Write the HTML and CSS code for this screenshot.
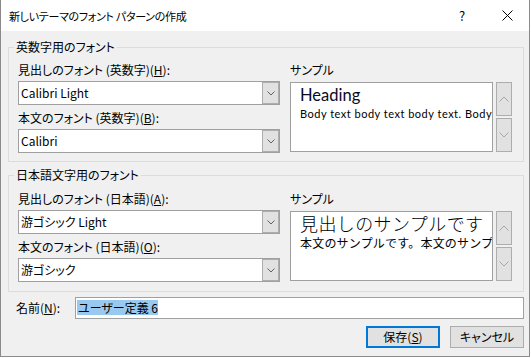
FILE: index.html
```html
<!DOCTYPE html>
<html>
  <head>
    <meta charset='utf-8'/>
    <title>新しいテーマのフォント パターンの作成</title>
    <link rel="stylesheet" href="styles.css">
  </head>
  <body>
    <div class='window'>
      <div class='titlebar'>
        <span class='title'>新しいテーマのフォント パターンの作成</span>
        <span class='title-btn help'>?</span>
        <span class='title-btn close'>
          <svg width='11' height='11' viewBox='0 0 11 11'><path d='M0.5 0.5 L10.5 10.5 M10.5 0.5 L0.5 10.5' stroke='#000' stroke-width='1' fill='none'/></svg>
        </span>
      </div>

      <div class='content'>
        <fieldset class='group'>
          <legend>英数字用のフォント</legend>
          <div class='group-grid'>
            <div class='fields'>
              <div class='field-label'>見出しのフォント (英数字)(<u>H</u>):</div>
              <div class='combo'>
                <span class='combo-text'>Calibri Light</span>
                <span class='combo-btn'><svg width='8' height='5' viewBox='0 0 8 5'><path d='M0.5 0.5 L4 4 L7.5 0.5' stroke='#606060' fill='none'/></svg></span>
              </div>
              <div class='field-label'>本文のフォント (英数字)(<u>B</u>):</div>
              <div class='combo'>
                <span class='combo-text'>Calibri</span>
                <span class='combo-btn'><svg width='8' height='5' viewBox='0 0 8 5'><path d='M0.5 0.5 L4 4 L7.5 0.5' stroke='#606060' fill='none'/></svg></span>
              </div>
            </div>
            <div class='sample'>
              <div class='field-label'>サンプル</div>
              <div class='sample-row'>
                <div class='sample-box sample-en'>
                  <div class='sample-head'>Heading</div>
                  <div class='sample-body'>Body text body text body text. Body text body text.</div>
                </div>
                <div class='spin'>
                  <span class='spin-btn'><svg width='10' height='6' viewBox='0 0 10 6'><path d='M0.5 5.5 L5 1 L9.5 5.5' stroke='#a6a6a6' fill='none'/></svg></span>
                  <span class='spin-btn'><svg width='10' height='6' viewBox='0 0 10 6'><path d='M0.5 0.5 L5 5 L9.5 0.5' stroke='#a6a6a6' fill='none'/></svg></span>
                </div>
              </div>
            </div>
          </div>
        </fieldset>

        <fieldset class='group group-ja'>
          <legend>日本語文字用のフォント</legend>
          <div class='group-grid'>
            <div class='fields'>
              <div class='field-label'>見出しのフォント (日本語)(<u>A</u>):</div>
              <div class='combo'>
                <span class='combo-text'>游ゴシック Light</span>
                <span class='combo-btn'><svg width='8' height='5' viewBox='0 0 8 5'><path d='M0.5 0.5 L4 4 L7.5 0.5' stroke='#606060' fill='none'/></svg></span>
              </div>
              <div class='field-label'>本文のフォント (日本語)(<u>O</u>):</div>
              <div class='combo'>
                <span class='combo-text'>游ゴシック</span>
                <span class='combo-btn'><svg width='8' height='5' viewBox='0 0 8 5'><path d='M0.5 0.5 L4 4 L7.5 0.5' stroke='#606060' fill='none'/></svg></span>
              </div>
            </div>
            <div class='sample'>
              <div class='field-label'>サンプル</div>
              <div class='sample-row'>
                <div class='sample-box sample-ja'>
                  <div class='sample-head'>見出しのサンプルです</div>
                  <div class='sample-body'>本文のサンプルです。本文のサンプルです。</div>
                </div>
                <div class='spin'>
                  <span class='spin-btn'><svg width='10' height='6' viewBox='0 0 10 6'><path d='M0.5 5.5 L5 1 L9.5 5.5' stroke='#a6a6a6' fill='none'/></svg></span>
                  <span class='spin-btn'><svg width='10' height='6' viewBox='0 0 10 6'><path d='M0.5 0.5 L5 5 L9.5 0.5' stroke='#a6a6a6' fill='none'/></svg></span>
                </div>
              </div>
            </div>
          </div>
        </fieldset>

        <div class='name-row'>
          <span class='name-label'>名前(<u>N</u>):</span>
          <div class='name-input'><span class='selected'>ユーザー定義 6</span></div>
        </div>

        <div class='actions'>
          <button class='btn btn-default'>保存(<u>S</u>)</button>
          <button class='btn'>キャンセル</button>
        </div>
      </div>
    </div>
  </body>
</html>
```

FILE: styles.css
```css
* {
  font-family: 'Noto Sans CJK JP', sans-serif;
}

body {
  margin: 0;
  background: #fff;
  font-size: 12px;
  line-height: 16px;
  color: #000;
  font-feature-settings: 'palt';
}

.window {
  width: 530px;
  height: 357px;
  box-sizing: border-box;
  border: 1px solid #8a8a8a;
  border-top: none;
  background: #f0f0f0;
}

.titlebar {
  height: 31px;
  background: #fff;
  display: flex;
  align-items: center;
}

.title {
  flex: 1;
  padding-left: 8px;
  font-size: 11px;
  letter-spacing: -0.3px;
}

.title-btn {
  height: 31px;
  display: flex;
  align-items: center;
  justify-content: center;
}

.help {
  width: 46px;
  font-size: 13px;
}

.close {
  width: 44px;
}

.content {
  padding: 8px 5px 0 7px;
}

.group {
  margin: 0;
  padding: 7px 11px 8px 9px;
  border: 1px solid #dcdcdc;
  min-width: 0;
}

.group + .group {
  margin-top: 5px;
}

.group-ja {
  padding-top: 8px;
  padding-bottom: 9px;
}

legend {
  padding: 0 2px;
  margin-left: -4px;
  line-height: 16px;
}

.group-grid {
  display: grid;
  grid-template-columns: 262px 1fr;
  column-gap: 10px;
}

.field-label {
  line-height: 16px;
}

.combo {
  margin: 3px 0 5px;
  height: 24px;
  box-sizing: border-box;
  border: 1px solid #a0a0a0;
  background: #fff;
  display: flex;
}

.combo:last-child {
  margin-bottom: 0;
}

.combo-text {
  flex: 1;
  padding-left: 2px;
  line-height: 22px;
}

.combo-btn {
  width: 17px;
  box-sizing: border-box;
  background: #e1e1e1;
  border: 1px solid #adadad;
  display: flex;
  align-items: center;
  justify-content: center;
}

.sample-row {
  margin-top: 4px;
  display: flex;
  gap: 3px;
}

.sample-box {
  width: 203px;
  height: 70px;
  box-sizing: border-box;
  border: 1px solid #a0a0a0;
  background: #fff;
  padding: 2px 8px 0 9px;
  overflow: hidden;
  white-space: nowrap;
  font-feature-settings: normal;
}

.sample-en .sample-head {
  font-family: 'Lato', sans-serif;
  font-size: 16.5px;
  line-height: 20px;
  color: #0a0a1e;
}

.sample-en .sample-body {
  font-family: 'Lato', sans-serif;
  font-size: 11px;
  letter-spacing: 0.5px;
  line-height: 18px;
}

.sample-ja {
  padding-top: 0;
}

.sample-ja .sample-head {
  font-weight: 300;
  font-size: 18px;
  letter-spacing: 0.4px;
  line-height: 22px;
}

.sample-ja .sample-body {
  font-size: 12px;
  letter-spacing: 0.2px;
  line-height: 18px;
}

.spin {
  width: 16px;
  display: flex;
  flex-direction: column;
  gap: 2px;
}

.spin-btn {
  flex: 1;
  background: #e1e1e1;
  border: 1px solid #adadad;
  display: flex;
  align-items: center;
  justify-content: center;
}

.name-row {
  margin-top: 5px;
  padding-left: 8px;
  display: flex;
  align-items: center;
}

.name-label {
  width: 59px;
}

.name-input {
  flex: 1;
  height: 22px;
  box-sizing: border-box;
  border: 1px solid #a0a0a0;
  background: #fff;
  padding: 2px 1px;
}

.selected {
  display: inline-block;
  background: #99c9ef;
  line-height: 15px;
  padding-left: 1px;
}

.actions {
  margin-top: 7px;
  display: flex;
  justify-content: flex-end;
  gap: 10px;
}

.btn {
  width: 74px;
  height: 22px;
  box-sizing: border-box;
  border: 1px solid #adadad;
  background: #e1e1e1;
  font-size: 12px;
  line-height: 16px;
  padding: 0;
  color: #000;
  font-feature-settings: 'palt';
}

.btn-default {
  border: 2px solid #0078d7;
}
```
